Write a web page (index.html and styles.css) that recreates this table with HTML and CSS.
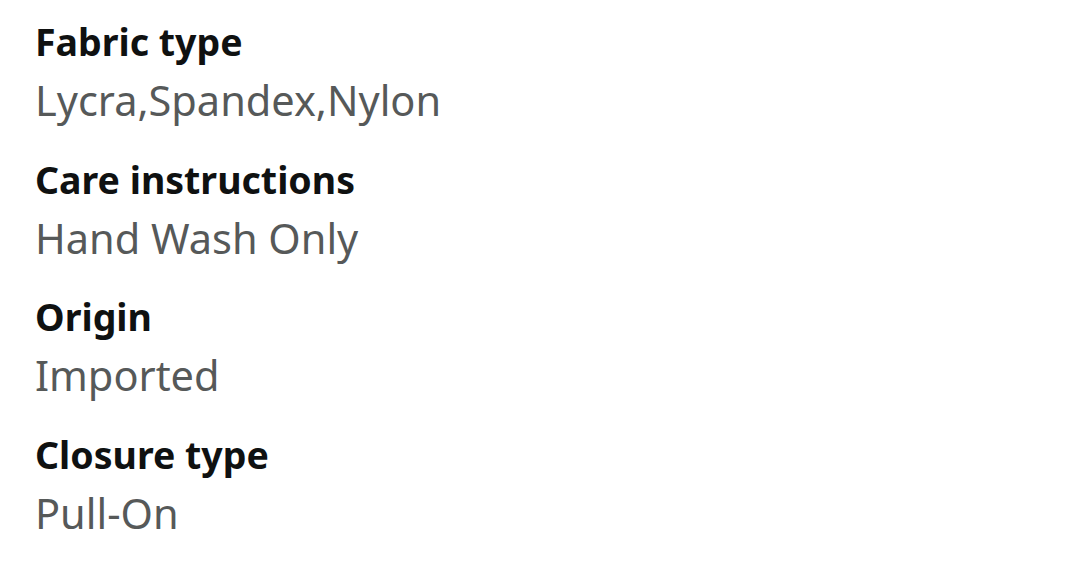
FILE: index.html
```html
<!DOCTYPE html>
<html>
<head>
<meta charset="utf-8">
<link rel="stylesheet" href="styles.css">
</head>
<body>
<div class="list">
  <div class="item">
    <div class="label">Fabric type</div>
    <div class="value">Lycra,Spandex,Nylon</div>
  </div>
  <div class="item">
    <div class="label">Care instructions</div>
    <div class="value">Hand Wash Only</div>
  </div>
  <div class="item">
    <div class="label">Origin</div>
    <div class="value">Imported</div>
  </div>
  <div class="item">
    <div class="label">Closure type</div>
    <div class="value">Pull-On</div>
  </div>
</div>
</body>
</html>
```

FILE: styles.css
```css
html, body {
  margin: 0;
  padding: 0;
  background: #ffffff;
}
body {
  font-family: "Noto Sans", "Open Sans", sans-serif;
}
.list {
  display: flex;
  flex-direction: column;
  padding: 17px 0 0 35px;
}
.item {
  display: flex;
  flex-direction: column;
  height: 137.5px;
}
.label {
  font-weight: 700;
  font-size: 37.5px;
  line-height: 50px;
  color: #0f1111;
}
.value {
  font-size: 41.5px;
  line-height: 66px;
  color: #565959;
}
```
